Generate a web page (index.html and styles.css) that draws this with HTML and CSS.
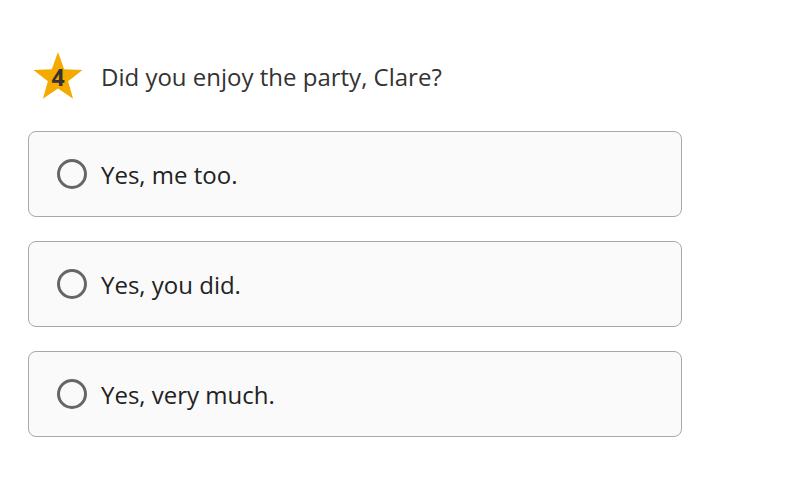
FILE: index.html
```html
<!DOCTYPE html>
<html>
<head>
<meta charset="utf-8">
<link rel="stylesheet" href="styles.css">
</head>
<body>
<div class="quiz">
  <div class="question">
    <div class="star">
      <svg width="52" height="50" viewBox="0 0 52 50"><polygon fill="#f5aa00" points="26,1 32.2,18.3 50.5,18.9 36.1,30.2 41.1,47.8 26,37.5 10.9,47.8 15.9,30.2 1.5,18.9 19.8,18.3"/></svg>
      <span class="num">4</span>
    </div>
    <div class="qtext">Did you enjoy the party, Clare?</div>
  </div>
  <div class="options">
    <label class="option"><span class="radio"></span><span class="otext">Yes, me too.</span></label>
    <label class="option"><span class="radio"></span><span class="otext">Yes, you did.</span></label>
    <label class="option"><span class="radio"></span><span class="otext">Yes, very much.</span></label>
  </div>
</div>
</body>
</html>
```
FILE: styles.css
```css
html, body { margin: 0; padding: 0; background: #fff; }
body { font-family: "Open Sans", "Noto Sans", sans-serif; color: #333; }
.quiz { padding: 51px 0 0 28px; width: 654px; }
.question { display: flex; align-items: center; height: 50px; }
.star { position: relative; width: 52px; height: 50px; margin-left: 4px; }
.star svg { display: block; }
.num { position: absolute; left: 0; right: 0; top: 1px; text-align: center; font-weight: 700; font-size: 23px; line-height: 50px; color: #333; }
.qtext { margin-left: 17px; font-size: 24px; color: #333; }
.options { display: flex; flex-direction: column; gap: 24px; margin-top: 30px; }
.option { display: flex; align-items: center; height: 84px; border: 1px solid #a8a8a8; border-radius: 8px; background: #fafafa; padding-left: 28px; }
.radio { width: 24px; height: 24px; border: 3px solid #666; border-radius: 50%; box-sizing: content-box; flex: none; }
.otext { margin-left: 14px; font-size: 24px; color: #222; }
```
